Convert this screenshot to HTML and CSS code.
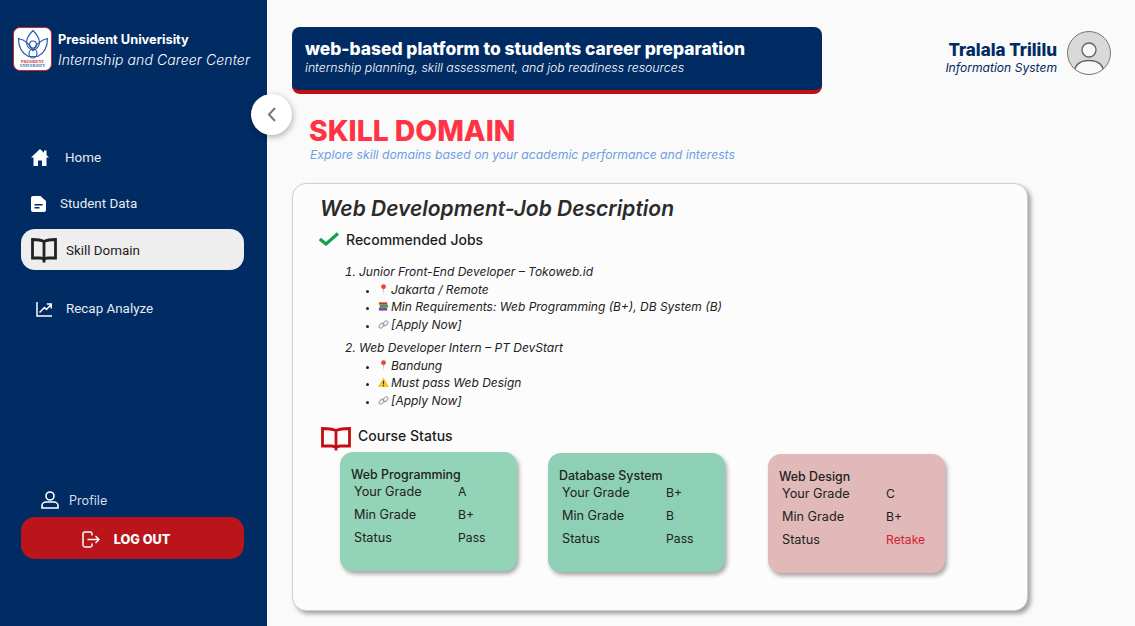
FILE: index.html
```html
<!DOCTYPE html>
<html lang="en">
<head>
    <meta charset="UTF-8">
    <meta name="viewport" content="width=device-width, initial-scale=1.0">
    <title>Skill Domain</title>
    <link rel="stylesheet" href="styles.css">
</head>
<body>
    <aside class="sidebar">
        <div class="brand">
            <div class="logo">
                <svg class="logo-mark" viewBox="0 0 32 30" fill="none" stroke="#2a5caa" stroke-width="1.200">
                    <path d="M16 1C12 5 9.500 8.500 9.500 13C9.500 17 13 20 16 21C19 20 22.500 17 22.500 13C22.500 8.500 20 5 16 1Z"/>
                    <path d="M1.500 9C1.500 17 5 24 11.500 27H20.500C27 24 30.500 17 30.500 9C26 10 20 13 16 21C12 13 6 10 1.500 9Z"/>
                    <circle cx="16" cy="15" r="3.500"/>
                    <ellipse cx="16" cy="24" rx="4" ry="4.500"/>
                </svg>
                <div class="logo-red">PRESIDENT</div>
                <div class="logo-blue">UNIVERSITY</div>
            </div>
            <div class="brand-text">
                <div class="brand-name">President Univerisity</div>
                <div class="brand-sub">Internship and Career Center</div>
            </div>
        </div>

        <nav class="nav">
            <a class="nav-item item-home" href="#">
                <svg class="icon-home" viewBox="0 0 18 17" fill="#fff"><path d="M9 0L0 8.500H2.500V17H7V11.500H11V17H15.500V8.500H18L15.500 6V1.500H13V3.700Z"/></svg>
                Home
            </a>
            <a class="nav-item item-student" href="#">
                <svg class="icon-doc" viewBox="0 0 15 16" fill="#fff"><path d="M2 0H9.500L15 5V14A2 2 0 0 1 13 16H2A2 2 0 0 1 0 14V2A2 2 0 0 1 2 0Z"/><path d="M3.500 8H11.500V9.500H3.500ZM3.500 11H8.500V12.500H3.500Z" fill="#012b63"/></svg>
                Student Data
            </a>
            <a class="nav-item item-skill active" href="#">
                <svg class="icon-book" viewBox="0 0 26 25" fill="none" stroke="#222" stroke-width="2.800"><path d="M13 3.500C10 2 6 1.500 1.500 1.500V20H9C11 20 13 21 13 22.500C13 21 15 20 17 20H24.500V1.500C20 1.500 16 2 13 3.500ZM13 3.500V24.500"/></svg>
                Skill Domain
            </a>
            <a class="nav-item item-recap" href="#">
                <svg class="icon-chart" viewBox="0 0 16 16" fill="none" stroke="#fff" stroke-width="1.500"><path d="M1 1V15H16M3.500 11.500L8.500 6.500L10.500 8.500L15 3.500M10.800 3H15.200V7.400"/></svg>
                Recap Analyze
            </a>
        </nav>

        <div class="side-bottom">
            <a class="profile" href="#">
                <svg class="icon-user" viewBox="0 0 18 18" fill="none" stroke="#fff" stroke-width="1.600"><circle cx="9" cy="5" r="4"/><path d="M1 17V14.500C1 12.500 3 11 5 11H13C15 11 17 12.500 17 14.500V17Z"/></svg>
                Profile
            </a>
            <a class="logout" href="#">
                <svg class="icon-logout" viewBox="0 0 18 17" fill="none" stroke="#fff" stroke-width="1.500"><path d="M10 4.500V2.500A1.700 1.700 0 0 0 8.300 1H2.700A1.700 1.700 0 0 0 1 2.500V14.500A1.700 1.700 0 0 0 2.700 16H8.300A1.700 1.700 0 0 0 10 14.500V12.500M5.500 8.500H17M13.500 5L17 8.500L13.500 12"/></svg>
                LOG OUT
            </a>
        </div>
    </aside>

    <button class="collapse" type="button" aria-label="Collapse sidebar">
        <svg viewBox="0 0 9 15" fill="none" stroke="#777" stroke-width="2"><path d="M8 1L2 7.500L8 14"/></svg>
    </button>

    <main class="main">
        <header class="topbar">
            <div class="banner">
                <div class="banner-title">web-based platform to students career preparation</div>
                <div class="banner-sub">internship planning, skill assessment, and job readiness resources</div>
            </div>
            <div class="user">
                <div class="user-text">
                    <div class="user-name">Tralala Trililu</div>
                    <div class="user-role">Information System</div>
                </div>
                <svg class="avatar" viewBox="0 0 44 44">
                    <defs><clipPath id="avatarClip"><circle cx="22" cy="22" r="21.500"/></clipPath></defs>
                    <circle cx="22" cy="22" r="21.500" fill="#d9d9d9"/>
                    <g clip-path="url(#avatarClip)">
                        <circle cx="22" cy="19" r="7" fill="#f8f8f8" stroke="#666" stroke-width="1.400"/>
                        <path d="M7 44C7 34 13 29.500 22 29.500C31 29.500 37 34 37 44Z" fill="#f8f8f8" stroke="#666" stroke-width="1.400"/>
                    </g>
                    <circle cx="22" cy="22" r="21.500" fill="none" stroke="#777" stroke-width="1"/>
                </svg>
            </div>
        </header>

        <h1 class="page-title">SKILL DOMAIN</h1>
        <p class="page-sub">Explore skill domains based on your academic performance and interests</p>

        <section class="panel">
            <h2 class="panel-title">Web Development-Job Description</h2>

            <div class="section-head jobs-head">
                <svg class="icon-check" viewBox="0 0 20 14" fill="none" stroke="#12a150" stroke-width="3.200"><path d="M.800 7L7 12L19 1.500"/></svg>
                Recommended Jobs
            </div>

            <ol class="jobs">
                <li>
                    Junior Front-End Developer – Tokoweb.id
                    <ul>
                        <li><svg class="emoji" viewBox="0 0 12 12"><circle cx="6" cy="3" r="2.600" fill="#e8453c"/><path d="M5.500 5H6.500L6 12Z" fill="#aaa"/></svg>Jakarta / Remote</li>
                        <li><svg class="emoji" viewBox="0 0 12 12"><path d="M1 1.500H10V4H1Z" fill="#c0392b"/><path d="M2 4H11V7H2Z" fill="#3f9b4f"/><path d="M1 7H10V10.500H1Z" fill="#7b4fa0"/></svg>Min Requirements: Web Programming (B+), DB System (B)</li>
                        <li><svg class="emoji" viewBox="0 0 12 12" fill="none" stroke="#98a4b3" stroke-width="1.200"><rect x="0.800" y="5.500" width="6" height="3.600" rx="1.800" transform="rotate(-45 3.800 7.300)"/><rect x="5.200" y="2.900" width="6" height="3.600" rx="1.800" transform="rotate(-45 8.200 4.700)"/></svg>[Apply Now]</li>
                    </ul>
                </li>
                <li>
                    Web Developer Intern – PT DevStart
                    <ul>
                        <li><svg class="emoji" viewBox="0 0 12 12"><circle cx="6" cy="3" r="2.600" fill="#e8453c"/><path d="M5.500 5H6.500L6 12Z" fill="#aaa"/></svg>Bandung</li>
                        <li><svg class="emoji" viewBox="0 0 12 12"><path d="M6 .5L12 11H0Z" fill="#f7c325"/><path d="M5.400 4H6.600V8H5.400ZM5.400 8.800H6.600V10H5.400Z" fill="#333"/></svg>Must pass Web Design</li>
                        <li><svg class="emoji" viewBox="0 0 12 12" fill="none" stroke="#98a4b3" stroke-width="1.200"><rect x="0.800" y="5.500" width="6" height="3.600" rx="1.800" transform="rotate(-45 3.800 7.300)"/><rect x="5.200" y="2.900" width="6" height="3.600" rx="1.800" transform="rotate(-45 8.200 4.700)"/></svg>[Apply Now]</li>
                    </ul>
                </li>
            </ol>

            <div class="section-head status-head">
                <svg class="icon-redbook" viewBox="0 0 30 24" fill="none" stroke="#c40d12" stroke-width="2.800"><path d="M15 3.500C11.500 2 6.500 1.500 1.500 1.500V19H10.500C12.500 19 15 20 15 21.500C15 20 17.500 19 19.500 19H28.500V1.500C23.500 1.500 18.500 2 15 3.500ZM15 3.500V23.500"/></svg>
                Course Status
            </div>

            <div class="courses">
                <div class="course course-web">
                    <div class="course-name">Web Programming</div>
                    <div class="course-grid">
                        <span>Your Grade</span><span>A</span>
                        <span>Min Grade</span><span>B+</span>
                        <span>Status</span><span>Pass</span>
                    </div>
                </div>
                <div class="course course-db">
                    <div class="course-name">Database System</div>
                    <div class="course-grid">
                        <span>Your Grade</span><span>B+</span>
                        <span>Min Grade</span><span>B</span>
                        <span>Status</span><span>Pass</span>
                    </div>
                </div>
                <div class="course course-design">
                    <div class="course-name">Web Design</div>
                    <div class="course-grid">
                        <span>Your Grade</span><span>C</span>
                        <span>Min Grade</span><span>B+</span>
                        <span>Status</span><span class="retake">Retake</span>
                    </div>
                </div>
            </div>
        </section>
    </main>
</body>
</html>
```

FILE: styles.css
```css
* {
    box-sizing: border-box;
}
body {
    margin: 0;
    height: 626px;
    overflow: hidden;
    display: flex;
    font-family: Inter, "Open Sans", sans-serif;
    background-color: #fafafa;
    color: #222;
    position: relative;
}
a {
    text-decoration: none;
    color: inherit;
}

/* sidebar */
.sidebar {
    width: 267px;
    flex-shrink: 0;
    background-color: #012b63;
    color: #fff;
    display: flex;
    flex-direction: column;
    padding: 27px 23px 67px 21px;
}
.brand {
    display: flex;
    align-items: flex-start;
    gap: 6px;
    margin-left: -8px;
    margin-right: -20px;
}
.logo {
    width: 39px;
    height: 44px;
    background-color: #fff;
    border: 1.500px solid #c9252c;
    border-radius: 7px;
    display: flex;
    flex-direction: column;
    align-items: center;
    padding-top: 1px;
    flex-shrink: 0;
}
.logo-mark {
    width: 32px;
    height: 31px;
}
.logo-red,
.logo-blue {
    font-family: "Liberation Serif", serif;
    font-size: 4px;
    line-height: 4px;
    font-weight: bold;
    color: #c9252c;
    white-space: nowrap;
}
.logo-blue {
    color: #2a5caa;
}
.brand-text {
    white-space: nowrap;
    padding-top: 4px;
}
.brand-name {
    font-size: 12.800px;
    line-height: 18px;
    font-weight: 700;
}
.brand-sub {
    font-size: 14px;
    line-height: 21px;
    font-style: italic;
    font-weight: 300;
    letter-spacing: 0.100px;
}

.nav {
    margin-top: 66px;
    display: flex;
    flex-direction: column;
    gap: 5px;
}
.nav-item {
    height: 41px;
    display: flex;
    align-items: center;
    font-family: Roboto, sans-serif;
    font-size: 13.400px;
    color: #e6ebf2;
    border-radius: 14px;
}
.item-home {
    padding-left: 10px;
    gap: 16px;
}
.item-student {
    padding-left: 10px;
    gap: 14px;
}
.item-skill {
    padding: 1px 0 0 10px;
    gap: 9px;
}
.item-recap {
    padding-left: 15px;
    gap: 14px;
    margin-top: 13px;
}
.active {
    background-color: #eeeeee;
    color: #222;
}
.icon-home {
    width: 18px;
    height: 17px;
}
.icon-doc {
    width: 15px;
    height: 16px;
}
.icon-book {
    width: 26px;
    height: 25px;
}
.icon-chart {
    width: 16px;
    height: 16px;
}

.side-bottom {
    margin-top: auto;
}
.profile {
    display: flex;
    align-items: center;
    gap: 10px;
    padding-left: 20px;
    font-size: 12.600px;
    color: #d5dce8;
    margin-bottom: 8px;
}
.icon-user {
    width: 18px;
    height: 18px;
}
.logout {
    height: 42px;
    background-color: #b9151b;
    border-radius: 14px;
    display: flex;
    align-items: center;
    justify-content: center;
    gap: 14px;
    color: #fff;
    font-size: 12.700px;
    font-weight: 800;
    padding: 2px 13px 0 0;
}
.icon-logout {
    width: 18px;
    height: 17px;
}

.collapse {
    position: absolute;
    left: 251px;
    top: 94px;
    width: 41px;
    height: 41px;
    border-radius: 50%;
    border: none;
    background-color: #fff;
    box-shadow: 1px 2px 6px rgba(0, 0, 0, 0.3);
    display: flex;
    align-items: center;
    justify-content: center;
    padding: 0;
}
.collapse svg {
    width: 9px;
    height: 15px;
}

/* main */
.main {
    flex: 1;
    padding: 27px 24px 0 25px;
}
.topbar {
    display: flex;
    justify-content: space-between;
    align-items: flex-start;
}
.banner {
    width: 530px;
    height: 67px;
    background-color: #012b63;
    border-bottom: 4px solid #c40d12;
    border-radius: 8px;
    color: #fff;
    padding: 11px 13px;
}
.banner-title {
    font-size: 17.400px;
    line-height: 22px;
    font-weight: 800;
    white-space: nowrap;
}
.banner-sub {
    font-size: 12.300px;
    line-height: 15px;
    font-style: italic;
    font-weight: 300;
    white-space: nowrap;
}
.user {
    display: flex;
    align-items: center;
    gap: 10px;
    padding-top: 4px;
}
.user-text {
    text-align: right;
    color: #012b63;
    padding-top: 9px;
}
.user-name {
    font-size: 17px;
    line-height: 19px;
    font-weight: 800;
}
.user-role {
    font-size: 12.100px;
    line-height: 15px;
    font-style: italic;
}
.avatar {
    width: 44px;
    height: 44px;
}

.page-title {
    margin: 19px 0 0 17px;
    font-size: 28.300px;
    line-height: 36px;
    font-weight: 800;
    color: #ff3344;
}
.page-sub {
    margin: -2px 0 0 18px;
    font-size: 12.200px;
    line-height: 16px;
    font-style: italic;
    color: #6f9fe0;
}

.panel {
    margin-top: 20px;
    width: 736px;
    height: 428px;
    border: 1px solid #cfcfcf;
    border-radius: 14px;
    box-shadow: 3px 3px 4px rgba(0, 0, 0, 0.35);
    background-color: #fcfcfc;
    padding: 11px 0 0 26px;
}
.panel-title {
    margin: 0 0 0 1px;
    font-size: 21px;
    line-height: 28px;
    font-weight: 600;
    font-style: italic;
    color: #2b2b2b;
}
.section-head {
    display: flex;
    font-size: 14px;
    font-weight: 500;
    color: #1c1c1c;
}
.jobs-head {
    margin-top: 7px;
    height: 18px;
    gap: 7px;
    align-items: center;
}
.icon-check {
    width: 20px;
    height: 14px;
}
.jobs {
    margin: 15px 0 0;
    padding-left: 40px;
    font-size: 12px;
    line-height: 17.500px;
    font-style: italic;
    color: #222;
}
.jobs > li {
    margin-bottom: 6px;
}
.jobs ul {
    margin: 0;
    padding-left: 19px;
    list-style-type: disc;
}
.jobs ul li::marker {
    font-size: 8px;
}
.emoji {
    width: 11px;
    height: 11px;
    margin-right: 2px;
    vertical-align: -1px;
}
.status-head {
    margin-top: 18px;
    margin-left: 2px;
    gap: 7px;
    height: 24px;
    line-height: 18px;
    align-items: flex-start;
}
.icon-redbook {
    width: 30px;
    height: 24px;
}
.courses {
    display: flex;
    align-items: flex-start;
    margin: 1px 0 0 21px;
}
.course {
    width: 177px;
    height: 119px;
    border-radius: 13px;
    box-shadow: 2px 3px 4px rgba(0, 0, 0, 0.35);
    padding: 15px 0 0 11px;
    font-size: 12.700px;
    color: #222;
    background-color: #93d3b8;
}
.course-db {
    margin: 1px 0 0 31px;
    background-color: #8dd0b5;
}
.course-design {
    margin: 2px 0 0 43px;
    background-color: #e0b9b8;
}
.course-name {
    font-size: 12.400px;
    font-weight: 500;
    line-height: 16px;
}
.course-grid {
    display: grid;
    grid-template-columns: 104px 1fr;
    row-gap: 7px;
    line-height: 16px;
    margin-top: 1px;
    padding-left: 3px;
}
.course-grid span:nth-child(even) {
    font-size: 12.200px;
}
.retake {
    color: #d42030;
}
```
